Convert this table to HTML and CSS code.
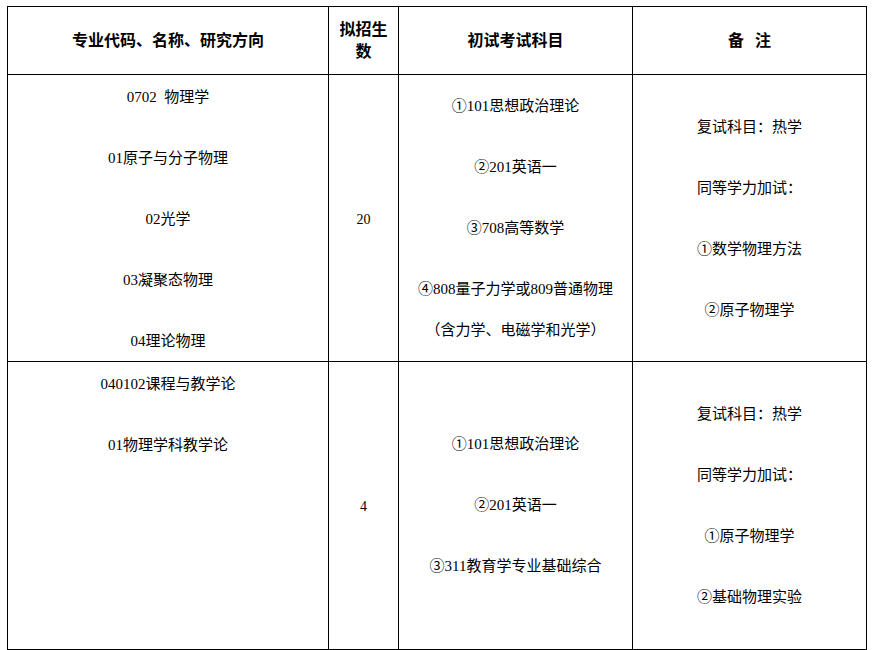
FILE: index.html
```html
<!DOCTYPE html>
<html lang="zh-CN">
<head>
<meta charset="utf-8">
<title>招生专业目录</title>
<link rel="stylesheet" href="styles.css">
</head>
<body>
<table class="catalog">
  <colgroup>
    <col class="c-major">
    <col class="c-num">
    <col class="c-exam">
    <col class="c-note">
  </colgroup>
  <thead>
    <tr class="head-row">
      <th>专业代码、名称、研究方向</th>
      <th class="num-head">拟招生<br>数</th>
      <th>初试考试科目</th>
      <th>备&nbsp;&nbsp;&nbsp;注</th>
    </tr>
  </thead>
  <tbody>
    <tr class="body-row">
      <td class="top">
        <div class="stack">
          <p>0702&nbsp; 物理学</p>
          <p>01原子与分子物理</p>
          <p>02光学</p>
          <p>03凝聚态物理</p>
          <p>04理论物理</p>
        </div>
      </td>
      <td class="mid num">20</td>
      <td class="mid">
        <div class="stack">
          <p>①101思想政治理论</p>
          <p>②201英语一</p>
          <p>③708高等数学</p>
          <p>④808量子力学或809普通物理</p>
          <p class="tight">（含力学、电磁学和光学）</p>
        </div>
      </td>
      <td class="mid">
        <div class="stack">
          <p>复试科目：热学</p>
          <p>同等学力加试：</p>
          <p>①数学物理方法</p>
          <p>②原子物理学</p>
        </div>
      </td>
    </tr>
    <tr class="body-row last">
      <td class="top">
        <div class="stack">
          <p>040102课程与教学论</p>
          <p>01物理学科教学论</p>
        </div>
      </td>
      <td class="mid num">4</td>
      <td class="mid">
        <div class="stack">
          <p>①101思想政治理论</p>
          <p>②201英语一</p>
          <p>③311教育学专业基础综合</p>
        </div>
      </td>
      <td class="mid">
        <div class="stack">
          <p>复试科目：热学</p>
          <p>同等学力加试：</p>
          <p>①原子物理学</p>
          <p>②基础物理实验</p>
        </div>
      </td>
    </tr>
  </tbody>
</table>
</body>
</html>
```

FILE: styles.css
```css
html, body {
  margin: 0;
  padding: 0;
  background: #ffffff;
}

body {
  padding: 6px 0 0 7px;
  font-family: "Liberation Serif", "Noto Sans CJK SC", serif;
  color: #000000;
}

.catalog {
  border-collapse: collapse;
  table-layout: fixed;
  width: 860px;
}

.c-major { width: 321px; }
.c-num { width: 70px; }
.c-exam { width: 234px; }
.c-note { width: 234px; }

.catalog th,
.catalog td {
  border: 1px solid #000000;
  padding: 0;
  text-align: center;
}

.catalog tr.last td {
  border-bottom-width: 2px;
}

.head-row {
  height: 68px;
}

.head-row th {
  font-family: "Noto Sans CJK SC", sans-serif;
  font-size: 16px;
  font-weight: bold;
  line-height: 22px;
  vertical-align: middle;
  padding-bottom: 3px;
}

.body-row {
  height: 287px;
}

.body-row.last {
  height: 288px;
}

.body-row td {
  font-size: 14px;
}

td.top {
  vertical-align: top;
  padding-top: 12px;
}

td.mid {
  vertical-align: middle;
}

td.num {
  padding-top: 3px;
}

.stack {
  display: flex;
  flex-direction: column;
  gap: 41px;
}

.stack p {
  margin: 0;
  line-height: 20px;
  font-size: 15px;
}

.stack p.tight {
  margin-top: -20px;
}
```
